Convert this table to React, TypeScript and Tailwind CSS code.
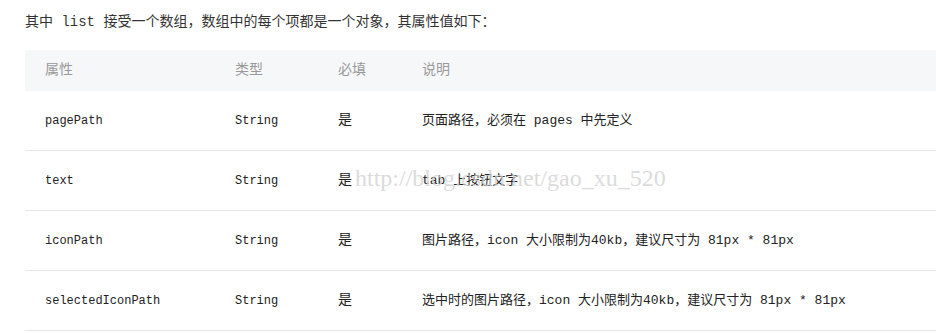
import React from "react";

const rows = [
  { name: "pagePath", type: "String", req: "是", desc: "页面路径，必须在 pages 中先定义" },
  { name: "text", type: "String", req: "是", desc: "tab 上按钮文字" },
  { name: "iconPath", type: "String", req: "是", desc: "图片路径，icon 大小限制为40kb，建议尺寸为 81px * 81px" },
  { name: "selectedIconPath", type: "String", req: "是", desc: "选中时的图片路径，icon 大小限制为40kb，建议尺寸为 81px * 81px" },
];

export default function App() {
  return (
    <div
      className="relative w-[936px] h-[333px] bg-white overflow-hidden text-[14px] text-[#333]"
      style={{ fontFamily: '"Liberation Mono", "Noto Sans CJK SC", monospace' }}
    >
      <p className="pl-[25px] pt-[12px] leading-[20px]">其中 list 接受一个数组，数组中的每个项都是一个对象，其属性值如下：</p>
      <div className="ml-[25px] mt-[18px]">
        <div className="grid grid-cols-[190px_103px_84px_1fr] h-[41px] items-center bg-[#f6f7f9] pl-5 text-[#999]">
          <div>属性</div>
          <div>类型</div>
          <div>必填</div>
          <div>说明</div>
        </div>
        {rows.map((r) => (
          <div
            key={r.name}
            className="grid grid-cols-[190px_103px_84px_1fr] h-[60px] items-center border-b border-[#e6e6e6] pl-5 text-[13px] text-[#222]"
          >
            <div className="text-[12px]">{r.name}</div>
            <div className="text-[12px]">{r.type}</div>
            <div className="text-[14px]">{r.req}</div>
            <div>{r.desc}</div>
          </div>
        ))}
      </div>
      <div
        className="absolute left-[355px] top-[164px] text-[24px] leading-[28px] text-[#d2d2d2]/80 pointer-events-none"
        style={{ fontFamily: '"Liberation Serif", serif' }}
      >
        http://blog.csdn.net/gao_xu_520
      </div>
    </div>
  );
}
